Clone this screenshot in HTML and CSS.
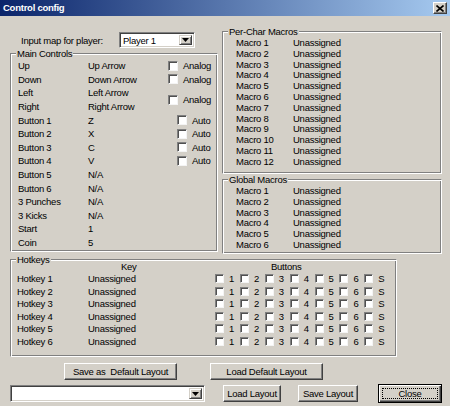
FILE: index.html
```html
<!DOCTYPE html>
<html>
<head>
<meta charset="utf-8">
<title>Control config</title>
<link rel="stylesheet" href="styles.css">
</head>
<body>
<div class="window">
  <div class="titlebar">
    <span class="title">Control config</span>
    <span class="tb-close"><svg width="8" height="7" viewBox="0 0 8 7"><path d="M0.5 0.5 L7.5 6.5 M7.5 0.5 L0.5 6.5" stroke="#000" stroke-width="1.6" fill="none"/></svg></span>
  </div>
  <div class="body">
    <div class="top">
      <div class="col-left">
        <div class="player-row">
          <span>Input map for player:</span>
          <div class="combo player"><span class="combo-text">Player 1</span><span class="combo-btn"><svg width="7" height="4" viewBox="0 0 7 4"><path d="M0 0 H7 L3.5 4 Z" fill="#000"/></svg></span></div>
        </div>
        <fieldset class="group main">
          <legend>Main Controls</legend>
          <div class="ctl-grid">
            <span class="n">Up</span><span class="v">Up Arrow</span><span class="chk analog"><span class="cb"></span>Analog</span>
            <span class="n">Down</span><span class="v">Down Arrow</span><span class="chk analog"><span class="cb"></span>Analog</span>
            <span class="n">Left</span><span class="v">Left Arrow</span><span class="chk analog span2"><span class="cb"></span>Analog</span>
            <span class="n">Right</span><span class="v">Right Arrow</span>
            <span class="n">Button 1</span><span class="v">Z</span><span class="chk auto"><span class="cb"></span>Auto</span>
            <span class="n">Button 2</span><span class="v">X</span><span class="chk auto"><span class="cb"></span>Auto</span>
            <span class="n">Button 3</span><span class="v">C</span><span class="chk auto"><span class="cb"></span>Auto</span>
            <span class="n">Button 4</span><span class="v">V</span><span class="chk auto"><span class="cb"></span>Auto</span>
            <span class="n">Button 5</span><span class="v">N/A</span>
            <span class="n">Button 6</span><span class="v">N/A</span>
            <span class="n">3 Punches</span><span class="v">N/A</span>
            <span class="n">3 Kicks</span><span class="v">N/A</span>
            <span class="n">Start</span><span class="v">1</span>
            <span class="n">Coin</span><span class="v">5</span>
          </div>
        </fieldset>
      </div>
      <div class="col-right">
        <fieldset class="group perchar">
          <legend>Per-Char Macros</legend>
          <div class="mac-grid">
            <span>Macro 1</span><span>Unassigned</span>
            <span>Macro 2</span><span>Unassigned</span>
            <span>Macro 3</span><span>Unassigned</span>
            <span>Macro 4</span><span>Unassigned</span>
            <span>Macro 5</span><span>Unassigned</span>
            <span>Macro 6</span><span>Unassigned</span>
            <span>Macro 7</span><span>Unassigned</span>
            <span>Macro 8</span><span>Unassigned</span>
            <span>Macro 9</span><span>Unassigned</span>
            <span>Macro 10</span><span>Unassigned</span>
            <span>Macro 11</span><span>Unassigned</span>
            <span>Macro 12</span><span>Unassigned</span>
          </div>
        </fieldset>
        <fieldset class="group global">
          <legend>Global Macros</legend>
          <div class="mac-grid">
            <span>Macro 1</span><span>Unassigned</span>
            <span>Macro 2</span><span>Unassigned</span>
            <span>Macro 3</span><span>Unassigned</span>
            <span>Macro 4</span><span>Unassigned</span>
            <span>Macro 5</span><span>Unassigned</span>
            <span>Macro 6</span><span>Unassigned</span>
          </div>
        </fieldset>
      </div>
    </div>

    <fieldset class="group hotkeys">
      <legend>Hotkeys</legend>
      <div class="hk-grid">
        <span class="hk-head-key">Key</span><span class="hk-head-btn">Buttons</span>

        <span class="hk-n">Hotkey 1</span><span>Unassigned</span>
        <span class="hb"><span class="cb"></span>1</span><span class="hb"><span class="cb"></span>2</span><span class="hb"><span class="cb"></span>3</span><span class="hb"><span class="cb"></span>4</span><span class="hb"><span class="cb"></span>5</span><span class="hb"><span class="cb"></span>6</span><span class="hb"><span class="cb"></span>S</span>

        <span class="hk-n">Hotkey 2</span><span>Unassigned</span>
        <span class="hb"><span class="cb"></span>1</span><span class="hb"><span class="cb"></span>2</span><span class="hb"><span class="cb"></span>3</span><span class="hb"><span class="cb"></span>4</span><span class="hb"><span class="cb"></span>5</span><span class="hb"><span class="cb"></span>6</span><span class="hb"><span class="cb"></span>S</span>

        <span class="hk-n">Hotkey 3</span><span>Unassigned</span>
        <span class="hb"><span class="cb"></span>1</span><span class="hb"><span class="cb"></span>2</span><span class="hb"><span class="cb"></span>3</span><span class="hb"><span class="cb"></span>4</span><span class="hb"><span class="cb"></span>5</span><span class="hb"><span class="cb"></span>6</span><span class="hb"><span class="cb"></span>S</span>

        <span class="hk-n">Hotkey 4</span><span>Unassigned</span>
        <span class="hb"><span class="cb"></span>1</span><span class="hb"><span class="cb"></span>2</span><span class="hb"><span class="cb"></span>3</span><span class="hb"><span class="cb"></span>4</span><span class="hb"><span class="cb"></span>5</span><span class="hb"><span class="cb"></span>6</span><span class="hb"><span class="cb"></span>S</span>

        <span class="hk-n">Hotkey 5</span><span>Unassigned</span>
        <span class="hb"><span class="cb"></span>1</span><span class="hb"><span class="cb"></span>2</span><span class="hb"><span class="cb"></span>3</span><span class="hb"><span class="cb"></span>4</span><span class="hb"><span class="cb"></span>5</span><span class="hb"><span class="cb"></span>6</span><span class="hb"><span class="cb"></span>S</span>

        <span class="hk-n">Hotkey 6</span><span>Unassigned</span>
        <span class="hb"><span class="cb"></span>1</span><span class="hb"><span class="cb"></span>2</span><span class="hb"><span class="cb"></span>3</span><span class="hb"><span class="cb"></span>4</span><span class="hb"><span class="cb"></span>5</span><span class="hb"><span class="cb"></span>6</span><span class="hb"><span class="cb"></span>S</span>
      </div>
    </fieldset>

    <div class="actions-1">
      <button class="btn wide">Save as&nbsp; Default Layout</button>
      <button class="btn wide">Load Default Layout</button>
    </div>
    <div class="actions-2">
      <div class="combo layout"><span class="combo-text"></span><span class="combo-btn"><svg width="7" height="4" viewBox="0 0 7 4"><path d="M0 0 H7 L3.5 4 Z" fill="#000"/></svg></span></div>
      <button class="btn load">Load Layout</button>
      <button class="btn save">Save Layout</button>
      <button class="btn default"><span class="focus">Close</span></button>
    </div>
  </div>
</div>
</body>
</html>
```

FILE: styles.css
```css
* { box-sizing: border-box; }

body {
  margin: 0;
  font-family: "Liberation Sans", Arial, sans-serif;
  font-size: 9.5px;
  letter-spacing: -0.25px;
  color: #000;
  background: #d4d0c8;
}

.window {
  width: 450px;
  height: 406px;
  background: #d4d0c8;
  overflow: hidden;
}

.titlebar {
  height: 16px;
  background: linear-gradient(to right, #0a246a, #a6caf0);
  display: flex;
  align-items: center;
  justify-content: space-between;
  padding: 0 3px;
}

.title {
  color: #fff;
  font-weight: bold;
  line-height: 16px;
}

.tb-close {
  width: 14px;
  height: 12px;
  background: #d4d0c8;
  border: 1px solid;
  border-color: #fff #404040 #404040 #fff;
  box-shadow: inset -1px -1px #808080;
  display: flex;
  align-items: center;
  justify-content: center;
}
.tb-close svg { display: block; }

.body { padding-left: 10px; }

.top {
  display: grid;
  grid-template-columns: 208px 220px;
  column-gap: 4px;
}

.col-left { padding-top: 16px; }
.col-right { padding-top: 10px; }

.player-row {
  display: grid;
  grid-template-columns: 98px 76px;
  padding-left: 11px;
  height: 16px;
  align-items: center;
}

/* group boxes */
fieldset.group {
  margin: 0;
  padding: 0;
  min-width: 0;
  border: 1px solid;
  border-color: #808080 #fff #fff #808080;
  box-shadow: inset 1px 1px #fff, inset -1px -1px #808080;
}
fieldset.group legend {
  margin-left: 5px;
  padding: 0 1px;
  line-height: 11px;
  background: #d4d0c8;
}

.main { margin-top: 2px; height: 204px; }
.perchar { height: 148px; }
.global { height: 80px; }

.ctl-grid {
  display: grid;
  grid-template-columns: 70px 80px 1fr;
  grid-auto-rows: 13.6px;
  padding-left: 7px;
  align-items: center;
  line-height: 11px;
}
.ctl-grid .n { grid-column: 1; }
.ctl-grid .v { grid-column: 2; }
.ctl-grid .chk { grid-column: 3; }

.chk { display: flex; align-items: center; }
.chk.auto { margin-left: 9px; }
.chk.span2 { grid-row: span 2; }

.cb {
  flex: none;
  width: 10px;
  height: 10px;
  margin-right: 5px;
  background: #fff;
  border: 1px solid;
  border-color: #808080 #f4f4f4 #f4f4f4 #808080;
  box-shadow: inset 1px 1px #505050;
}

.mac-grid {
  display: grid;
  grid-template-columns: 57px 1fr;
  grid-auto-rows: 10.8px;
  padding: 1px 0 0 13px;
  align-items: center;
  line-height: 10.8px;
}

/* hotkeys */
.hotkeys { margin-top: 1px; width: 387px; height: 103px; }

.hk-grid {
  display: grid;
  grid-template-columns: 71px 127px repeat(7, 24.9px);
  grid-auto-rows: 12.46px;
  padding-left: 6px;
  margin-top: -4.75px;
  align-items: center;
  line-height: 11px;
}
.hk-head-key { grid-column: 2; padding-left: 33px; }
.hk-head-btn { grid-column: 3 / span 7; padding-left: 56px; }
.hk-n { grid-column: 1; }

.hb { display: flex; align-items: center; }
.hb .cb { width: 9px; height: 9px; }

/* combos */
.combo {
  background: #fff;
  border: 1px solid;
  border-color: #808080 #fff #fff #808080;
  box-shadow: inset 1px 1px #404040, inset -1px -1px #d4d0c8;
  display: flex;
  align-items: stretch;
  padding: 2px;
}
.combo.player { width: 76px; height: 16px; }
.combo.layout { width: 195px; height: 17px; margin-right: 18px; }
.combo-text { flex: 1; padding-left: 1px; display: flex; align-items: center; }
.combo-btn {
  width: 13px;
  background: #d4d0c8;
  border: 1px solid;
  border-color: #d4d0c8 #404040 #404040 #d4d0c8;
  box-shadow: inset 1px 1px #fff, inset -1px -1px #808080;
  display: flex;
  align-items: center;
  justify-content: center;
}
.combo-btn svg { display: block; }

/* buttons */
.btn {
  font: inherit;
  letter-spacing: inherit;
  color: #000;
  background: #d4d0c8;
  border: 1px solid;
  border-color: #fff #404040 #404040 #fff;
  box-shadow: inset -1px -1px #808080;
  padding: 0;
  height: 17px;
  white-space: pre;
}

.actions-1 {
  display: flex;
  gap: 33px;
  margin-top: 6px;
  padding-left: 54px;
}
.btn.wide { width: 113px; }

.actions-2 {
  display: flex;
  align-items: center;
  margin-top: 4px;
}
.btn.load { width: 58px; margin-right: 17px; }
.btn.save { width: 60px; margin-right: 20px; }
.btn.default {
  width: 64px;
  height: 19px;
  border: 1px solid #000;
  box-shadow: inset 1px 1px #fff, inset -1px -1px #404040, inset -2px -2px #808080;
  display: flex;
  padding: 3px;
}
.focus {
  flex: 1;
  border: 1px dotted #000;
  display: flex;
  align-items: center;
  justify-content: center;
}
```
